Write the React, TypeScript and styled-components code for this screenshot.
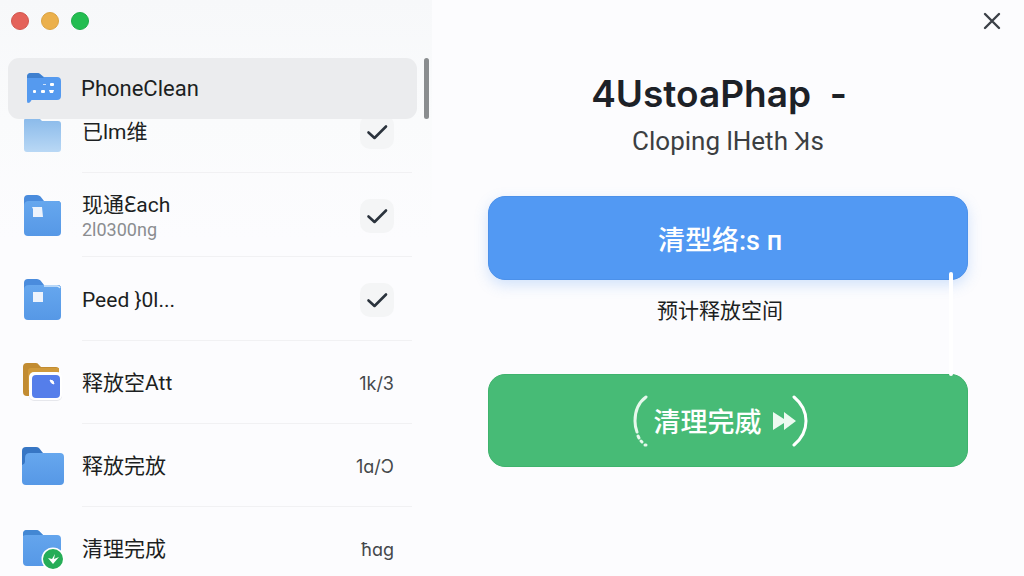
import React from "react";
import styled, { createGlobalStyle } from "styled-components";

const GlobalStyle = createGlobalStyle`
  * { box-sizing: border-box; }
  body {
    margin: 0;
    background: #fcfcfe;
    color: #1c1f22;
    font-family: Roboto, "Noto Sans CJK SC", "Noto Sans", sans-serif;
  }
  button { font: inherit; color: inherit; border: 0; padding: 0; background: none; cursor: pointer; }
`;

const Window = styled.div`
  display: grid;
  grid-template-columns: 27fr 37fr;
  height: 100vh;
  overflow: hidden;
`;

const Sidebar = styled.aside`
  display: flex;
  flex-direction: column;
  min-width: 0;
  min-height: 0;
  background: linear-gradient(#f7f8fa, #fafbfc 120px, #fcfcfe 240px);
`;

const TrafficLights = styled.div`
  display: flex;
  align-items: center;
  gap: 12px;
  height: 42px;
  padding-left: 11px;
  margin-bottom: 16px;
  flex: none;
`;

const Light = styled.button<{ $color: string; $edge: string }>`
  width: 18px;
  height: 18px;
  border-radius: 50%;
  background: ${(p) => p.$color};
  border: 1px solid ${(p) => p.$edge};
`;

const CurrentRow = styled.div`
  display: flex;
  gap: 7px;
  padding: 0 3px 0 8px;
  height: 61px;
  flex: none;
`;

const CurrentItem = styled.button`
  flex: 1;
  display: flex;
  align-items: center;
  gap: 16px;
  padding-left: 15px;
  border-radius: 11px;
  background: #ebecee;
  font-size: 22px;
  line-height: 28px;
  text-align: left;
`;

const ScrollThumb = styled.div`
  width: 5px;
  border-radius: 3px;
  background: #8a8d8f;
`;

const ListViewport = styled.div`
  flex: 1;
  min-height: 0;
  overflow: hidden;
`;

const List = styled.ul`
  list-style: none;
  margin: -30px 20px 0 22px;
  padding: 0;
`;

const Item = styled.li<{ $height: number }>`
  display: flex;
  align-items: center;
  gap: 18px;
  height: ${(p) => p.$height}px;
`;

const ItemBody = styled.div`
  flex: 1;
  align-self: stretch;
  display: flex;
  align-items: center;
  justify-content: space-between;
  padding: 2px 18px 0 0;
  border-bottom: 1px solid #f1f1f3;
`;

const ItemLabel = styled.label`
  display: flex;
  flex-direction: column;
  font-size: 21px;
  line-height: 28px;
`;

const Detail = styled.span`
  font-size: 18px;
  line-height: 22px;
  color: #8b8d90;
`;

const Count = styled.span`
  font-family: Inter, "Noto Sans", sans-serif;
  font-size: 18px;
  color: #45484b;
`;

const CheckWrap = styled.span`
  display: grid;
  width: 34px;
  height: 34px;
  & > * { grid-area: 1 / 1; }
  & > svg { place-self: center; pointer-events: none; }
`;

const CheckInput = styled.input`
  appearance: none;
  margin: 0;
  border-radius: 10px;
  background: #f4f5f6;
`;

const Main = styled.main`
  display: flex;
  flex-direction: column;
  min-width: 0;
  background: #fcfcfe;
`;

const TitleBar = styled.div`
  display: flex;
  justify-content: flex-end;
  align-items: center;
  height: 42px;
  padding-right: 22px;
`;

const CloseButton = styled.button`
  display: flex;
`;

const Content = styled.div`
  display: flex;
  flex-direction: column;
  padding: 28px 56px 0;
  text-align: center;
`;

const Title = styled.h1`
  margin: 0;
  padding-right: 18px;
  font-family: Inter, sans-serif;
  font-size: 37px;
  line-height: 48px;
  font-weight: 600;
  color: #1d2127;
  white-space: pre;
`;

const Subtitle = styled.p`
  margin: 0 0 34px;
  padding-top: 2px;
  font-size: 26px;
  line-height: 42px;
  color: #3c3f42;
`;

const Actions = styled.div`
  position: relative;
  display: flex;
  flex-direction: column;
`;

const ActionButton = styled.button<{ $tone: "blue" | "green" }>`
  display: flex;
  align-items: center;
  justify-content: center;
  gap: 6px;
  width: 100%;
  height: ${(p) => (p.$tone === "blue" ? 84 : 93)}px;
  padding-right: 16px;
  border-radius: 17px;
  font-size: 27px;
  font-weight: 500;
  white-space: pre;
  color: #fff;
  background: ${(p) => (p.$tone === "blue" ? "#5299f3" : "#47bb76")};
  border: 1px solid ${(p) => (p.$tone === "blue" ? "#4c91ea" : "#3fb36d")};
  box-shadow: ${(p) => (p.$tone === "blue" ? "0 5px 14px rgba(82, 153, 243, 0.25)" : "none")};
`;

const Estimate = styled.p`
  margin: 0;
  padding: 15px 16px 47px 0;
  font-size: 21px;
  line-height: 32px;
`;

const Connector = styled.span`
  position: absolute;
  top: 76px;
  right: 15px;
  width: 4px;
  height: 104px;
  border-radius: 2px;
  background: #fff;
`;

type FolderKind = "dots" | "pale" | "note" | "gloss" | "photo" | "plain" | "done";

function FolderShape({ front, back }: { front: string; back: string }) {
  return (
    <>
      <path d="M2 5q0-4 4-4h9q2 0 3.500 1.500L22 7h14q3 0 3 4v10H2z" fill={back} />
      <path d="M2 12q0-5 5-5h28q4 0 4 4v27q0 4-4 4H6q-4 0-4-4z" fill={front} />
    </>
  );
}

function FolderIcon({ kind }: { kind: FolderKind }) {
  return (
    <svg width="42" height="42" viewBox="0 0 42 42" aria-hidden="true">
      <defs>
        <linearGradient id={"face-" + kind} x1="0" y1="0" x2="0" y2="1">
          <stop offset="0" stopColor={kind === "pale" ? "#8abaea" : "#66a7ee"} />
          <stop offset="1" stopColor={kind === "pale" ? "#b9d8f5" : "#5698e6"} />
        </linearGradient>
      </defs>
      {kind === "dots" && (
        <>
          <path d="M4 9q0-4 4-4h6q2 0 3 1l4 3h13q4 0 4 4v15q0 4-4 4H9q-1 0-1 1-1 2-3 2-1 0-1-2z" fill="#559aef" />
          <path d="M4 10V9q0-4 4-4h6q2 0 3 1l4 4z" fill="#3f80cf" />
          <g fill="#fff">
            <rect x="27" y="15" width="4" height="3" rx="1" />
            <rect x="20" y="16" width="3" height="1" opacity=".7" />
            <rect x="10" y="22" width="3" height="3" rx="1" />
            <rect x="18" y="22" width="4" height="3" rx="1" />
            <path d="M26 22h5l-1 3h-3z" />
          </g>
        </>
      )}
      {kind === "pale" && (
        <path d="M2 11q0-3 3-3h10q2 0 3 1l2 2h16q3 0 3 3v25q0 3-3 3H5q-3 0-3-3z" fill="url(#face-pale)" />
      )}
      {(kind === "note" || kind === "gloss") && (
        <>
          <FolderShape front={`url(#face-${kind})`} back="#4a8cdd" />
          {kind === "gloss" && <path d="M22 8h13q2 0 3 2" fill="none" stroke="#d5e9fc" strokeWidth="1.500" />}
          <path d={kind === "note" ? "M10 13h10l1 10H11V15z" : "M11 14h10v10H11z"} fill="#edf3fc" />
        </>
      )}
      {kind === "photo" && (
        <>
          <path d="M1 5q0-4 4-4h9q2 0 3 2l2 2h15q3 0 3 3v26H5q-4 0-4-4z" fill="#c28c32" />
          <path d="M6 9q0-3 3-3h28v22H6z" fill="#d09a3c" />
          <rect x="7" y="12" width="33" height="27" rx="5" fill="#e6e7ec" />
          <rect x="7" y="10" width="33" height="28" rx="5" fill="#fff" />
          <rect x="10" y="13" width="28" height="23" rx="4" fill="#557eea" />
          <path d="M28 18q4 0 4 4-3 0-4-4z" fill="#fff" stroke="#fff" />
        </>
      )}
      {kind === "plain" && (
        <>
          <path d="M0 6q0-4 4-4h10q2 0 3 1l4 5v12H0z" fill="#3776c4" />
          <path d="M3 13q0-5 5-5h30q4 0 4 4v24q0 4-4 4H4q-4 0-4-4V20q3-1 3-3z" fill="url(#face-plain)" />
        </>
      )}
      {kind === "done" && (
        <>
          <path d="M1 6q0-4 4-4h9q2 0 3 1l4 4h14q4 0 4 4v24q0 3-3 3H5q-4 0-4-4z" fill="url(#face-done)" />
          <path d="M1 8V6q0-4 4-4h9q2 0 3 1l4 4H4q-2 0-3 1z" fill="#4387d3" />
          <circle cx="31" cy="31" r="11.500" fill="#fff" />
          <circle cx="31" cy="31" r="10" fill="#26ad57" />
          <path d="M26 30l5 6 6-7-5 2 1-5-3 5z" fill="#fff" />
        </>
      )}
    </svg>
  );
}

interface Entry {
  id: string;
  icon: FolderKind;
  label: string;
  detail?: string;
  count?: string;
}

const entries: Entry[] = [
  { id: "e1", icon: "pale", label: "已lm维" },
  { id: "e2", icon: "note", label: "现通Ɛach", detail: "2l0300ng" },
  { id: "e3", icon: "gloss", label: "Peed }0l..." },
  { id: "e4", icon: "photo", label: "释放空Att", count: "1k/3" },
  { id: "e5", icon: "plain", label: "释放完放", count: "1ɑ/Ɔ" },
  { id: "e6", icon: "done", label: "清理完成", count: "ħɑg" },
];

function Check({ id }: { id: string }) {
  return (
    <CheckWrap>
      <CheckInput type="checkbox" id={id} defaultChecked />
      <svg width="22" height="18" viewBox="0 0 22 18" fill="none" stroke="#2b333d" strokeWidth="2.600" strokeLinecap="round" strokeLinejoin="round">
        <path d="M2.500 9.500l6 5.500L20 3.500" />
      </svg>
    </CheckWrap>
  );
}

export default function App() {
  return (
    <>
      <GlobalStyle />
      <Window>
        <Sidebar>
          <TrafficLights>
            <Light $color="#e4625a" $edge="#d2564e" aria-label="Close window" />
            <Light $color="#ebb04c" $edge="#dba341" aria-label="Minimize" />
            <Light $color="#23bd51" $edge="#1dac48" aria-label="Zoom" />
          </TrafficLights>
          <CurrentRow>
            <CurrentItem>
              <FolderIcon kind="dots" />
              PhoneClean
            </CurrentItem>
            <ScrollThumb />
          </CurrentRow>
          <ListViewport>
            <List>
              {entries.map((e) => (
                <Item key={e.id} $height={e.count ? 83 : 84}>
                  <FolderIcon kind={e.icon} />
                  <ItemBody>
                    <ItemLabel as={e.count ? "span" : "label"} htmlFor={e.count ? undefined : e.id}>
                      {e.label}
                      {e.detail && <Detail>{e.detail}</Detail>}
                    </ItemLabel>
                    {e.count ? <Count>{e.count}</Count> : <Check id={e.id} />}
                  </ItemBody>
                </Item>
              ))}
            </List>
          </ListViewport>
        </Sidebar>
        <Main>
          <TitleBar>
            <CloseButton aria-label="Close">
              <svg width="20" height="20" viewBox="0 0 20 20" stroke="#3c4148" strokeWidth="2.400" strokeLinecap="round">
                <path d="M3 3l14 14M17 3L3 17" />
              </svg>
            </CloseButton>
          </TitleBar>
          <Content>
            <Title>4UstoaPhap  -</Title>
            <Subtitle>Cloping lHeth Ʞs</Subtitle>
            <Actions>
              <ActionButton $tone="blue">清型络:s п</ActionButton>
              <Estimate>预计释放空间</Estimate>
              <ActionButton $tone="green">
                <svg width="15" height="52" viewBox="0 0 15 52" fill="none" stroke="#e6f8ec" strokeWidth="3" strokeLinecap="round">
                  <path d="M13 2Q2 10 2 26q0 6 2 11" />
                  <path d="M5 41l1 2M8 46l1 1M12 50l1 0" />
                </svg>
                清理完威
                <svg width="40" height="52" viewBox="0 0 40 52">
                  <path d="M5 17l11 7v-7l12 9-12 9v-7L5 35z" fill="#ecfaf0" />
                  <path d="M26 2Q38 12 38 26T26 50" fill="none" stroke="#fff" strokeWidth="3" strokeLinecap="round" />
                </svg>
              </ActionButton>
              <Connector />
            </Actions>
          </Content>
        </Main>
      </Window>
    </>
  );
}
